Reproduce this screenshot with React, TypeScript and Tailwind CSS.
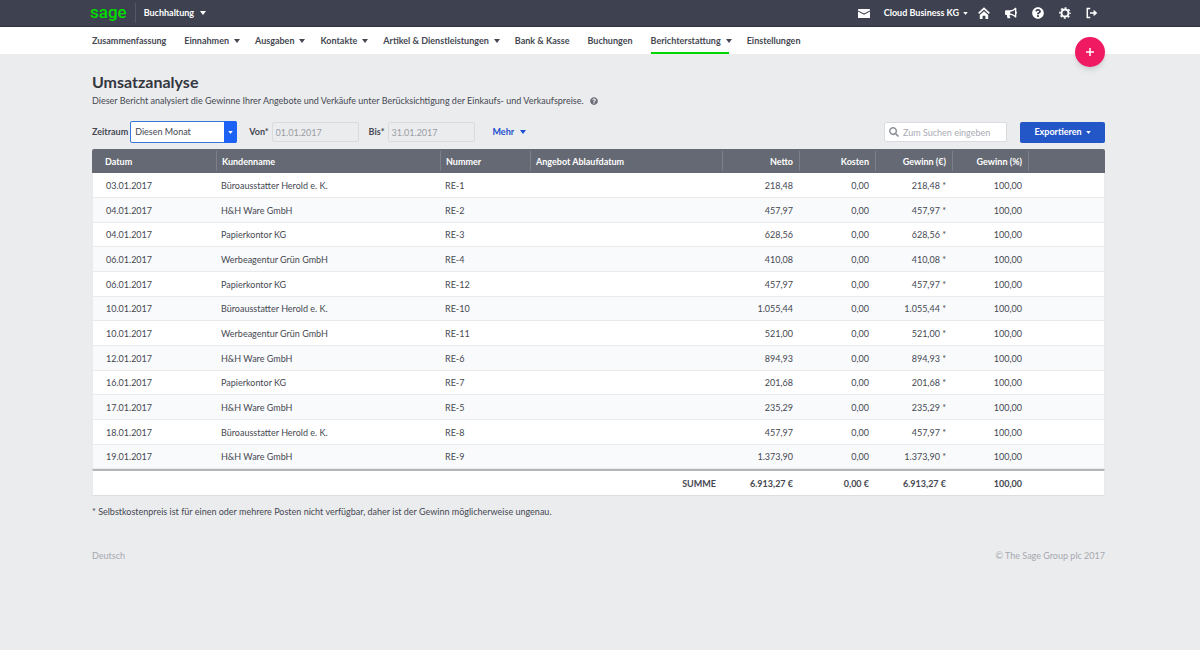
import { FaBullhorn, FaQuestionCircle, FaSearch } from "react-icons/fa";
import clsx from "clsx";

type Booking = {
  date: string;
  customer: string;
  number: string;
  net: string;
};

const bookings: Booking[] = [
  { date: "03.01.2017", customer: "Büroausstatter Herold e. K.", number: "RE-1", net: "218,48" },
  { date: "04.01.2017", customer: "H&H Ware GmbH", number: "RE-2", net: "457,97" },
  { date: "04.01.2017", customer: "Papierkontor KG", number: "RE-3", net: "628,56" },
  { date: "06.01.2017", customer: "Werbeagentur Grün GmbH", number: "RE-4", net: "410,08" },
  { date: "06.01.2017", customer: "Papierkontor KG", number: "RE-12", net: "457,97" },
  { date: "10.01.2017", customer: "Büroausstatter Herold e. K.", number: "RE-10", net: "1.055,44" },
  { date: "10.01.2017", customer: "Werbeagentur Grün GmbH", number: "RE-11", net: "521,00" },
  { date: "12.01.2017", customer: "H&H Ware GmbH", number: "RE-6", net: "894,93" },
  { date: "16.01.2017", customer: "Papierkontor KG", number: "RE-7", net: "201,68" },
  { date: "17.01.2017", customer: "H&H Ware GmbH", number: "RE-5", net: "235,29" },
  { date: "18.01.2017", customer: "Büroausstatter Herold e. K.", number: "RE-8", net: "457,97" },
  { date: "19.01.2017", customer: "H&H Ware GmbH", number: "RE-9", net: "1.373,90" },
];

const navItems = [
  { label: "Zusammenfassung" },
  { label: "Einnahmen", menu: true },
  { label: "Ausgaben", menu: true },
  { label: "Kontakte", menu: true },
  { label: "Artikel & Dienstleistungen", menu: true },
  { label: "Bank & Kasse" },
  { label: "Buchungen" },
  { label: "Berichterstattung", menu: true, active: true },
  { label: "Einstellungen" },
];

const columns = [
  { label: "Datum", width: "w-[124px]" },
  { label: "Kundenname", width: "w-[224px]" },
  { label: "Nummer", width: "w-[90px]" },
  { label: "Angebot Ablaufdatum", width: "w-[192px]" },
  { label: "Netto", width: "w-[77px]", right: true },
  { label: "Kosten", width: "w-[76px]", right: true },
  { label: "Gewinn (€)", width: "w-[77px]", right: true },
  { label: "Gewinn (%)", width: "w-[76px]", right: true },
  { label: "", width: "w-[77px]" },
];

const Caret = ({ className = "h-1 w-1.5" }: { className?: string }) => (
  <svg viewBox="0 0 6 4" className={clsx("shrink-0 fill-current", className)} aria-hidden="true">
    <path d="M0 0h6L3 4z" />
  </svg>
);

const MailIcon = () => (
  <svg viewBox="0 0 12 9" className="h-[9px] w-3 fill-current" aria-hidden="true">
    <path d="M.6 0h10.8q.6 0 .6.6v.8L6 4.6 0 1.400V.6Q0 0 .6 0z" />
    <path d="M0 2.600l6 3.200 6-3.200v5.800q0 .6-.6.6H.6Q0 9 0 8.400z" />
  </svg>
);

const HomeIcon = () => (
  <svg viewBox="0 0 12 12" className="size-3" aria-hidden="true">
    <path d="M.7 6.300L6 1.400l5.300 4.900" fill="none" stroke="currentColor" strokeWidth="1.700" />
    <path d="M6 4.200l4.200 3.900V12H7.400V8.800H4.600V12H1.800V8.100z" fill="currentColor" />
  </svg>
);

const GearIcon = () => (
  <svg viewBox="0 0 12 12" className="size-3" fill="none" stroke="currentColor" aria-hidden="true">
    <circle cx="6" cy="6" r="3.500" strokeWidth="1.900" />
    <circle cx="6" cy="6" r="5" strokeWidth="1.600" strokeDasharray="1.960 1.967" strokeDashoffset="0.980" />
  </svg>
);

const LogoutIcon = () => (
  <svg viewBox="0 0 12 12" className="size-3" aria-hidden="true">
    <path d="M4.200 1.500H1.300v9h2.900" fill="none" stroke="currentColor" strokeWidth="1.500" />
    <path d="M4 5.200h3.600V2.800L11.300 6 7.600 9.200V6.800H4z" fill="currentColor" />
  </svg>
);

const TopBar = () => (
  <header className="flex h-[27px] items-center justify-between border-b border-[#2e313d] bg-[#3e4250] pr-[102px] pl-[90px] text-white">
    <div className="flex h-full items-center">
      <a href="#" className="pb-[3px] font-[Roboto,sans-serif] text-[17px] leading-5 font-medium text-[#00dc00]">
        sage
      </a>
      <div className="ml-2 h-5 border-l border-[#555967]" />
      <button className="ml-2 flex items-center gap-1.5 font-bold">
        Buchhaltung
        <Caret />
      </button>
    </div>
    <div className="flex items-center">
      <button aria-label="Nachrichten">
        <MailIcon />
      </button>
      <button className="ml-[14px] flex items-center gap-1 font-bold">
        Cloud Business KG
        <Caret className="h-[3px] w-[5px]" />
      </button>
      <div className="ml-2.5 flex items-center gap-[15px]">
        <button aria-label="Startseite">
          <HomeIcon />
        </button>
        <button aria-label="Neuigkeiten">
          <FaBullhorn className="size-3" />
        </button>
        <button aria-label="Hilfe">
          <FaQuestionCircle className="size-3" />
        </button>
        <button aria-label="Einstellungen">
          <GearIcon />
        </button>
        <button aria-label="Abmelden">
          <LogoutIcon />
        </button>
      </div>
    </div>
  </header>
);

const MainNav = () => (
  <nav className="relative flex h-[27px] gap-[18px] bg-white pl-[92px] font-bold">
    {navItems.map((item) => (
      <a
        key={item.label}
        href="#"
        className={clsx(
          "flex h-[27px] items-center gap-[5px] border-b-2 pt-0.5",
          item.active ? "border-[#00d700]" : "border-transparent",
        )}
      >
        {item.label}
        {item.menu && <Caret className="-mr-[3px] h-1 w-1.5" />}
      </a>
    ))}
    <button
      aria-label="Neu"
      className="absolute top-[10px] right-[95px] flex size-[30px] items-center justify-center rounded-full bg-[#ef1a61] text-white shadow-md"
    >
      <svg viewBox="0 0 10 10" className="size-2.5" stroke="currentColor" strokeWidth="1.500" aria-hidden="true">
        <path d="M5 1v8M1 5h8" />
      </svg>
    </button>
  </nav>
);

const Filters = () => (
  <div className="flex h-[22px] items-center">
    <label htmlFor="period" className="font-bold">
      Zeitraum
    </label>
    <div className="relative ml-0.5 h-[22px] w-[107px]">
      <select
        id="period"
        className="h-full w-full appearance-none rounded-xs border border-[#3a76d6] bg-white pl-1"
      >
        <option>Diesen Monat</option>
      </select>
      <span className="pointer-events-none absolute inset-y-0 right-0 flex w-[13px] items-center justify-center rounded-r-xs bg-[#1b62f5] text-white">
        <Caret className="h-[3px] w-[5px]" />
      </span>
    </div>
    <label htmlFor="from" className="ml-3 font-bold">
      Von*
    </label>
    <input
      id="from"
      disabled
      defaultValue="01.01.2017"
      className="ml-[3px] h-5 w-[87px] rounded-xs border border-[#d9dbde] bg-[#ebecee] px-[3px] text-[#9a9ca4]"
    />
    <label htmlFor="to" className="ml-2.5 font-bold">
      Bis*
    </label>
    <input
      id="to"
      disabled
      defaultValue="31.01.2017"
      className="ml-[3px] h-5 w-[87px] rounded-xs border border-[#d9dbde] bg-[#ebecee] px-[3px] text-[#9a9ca4]"
    />
    <button className="ml-[18px] flex items-center gap-1.5 font-bold text-[#1b4fd0]">
      Mehr
      <Caret />
    </button>
    <div className="relative ml-auto">
      <FaSearch className="absolute top-[5px] left-[5px] size-2.5 text-[#8f9299]" />
      <input
        type="text"
        aria-label="Suche"
        placeholder="Zum Suchen eingeben"
        className="block h-5 w-[123px] rounded-xs border border-[#d9dbde] bg-white pl-[18px] placeholder:text-[#a9abb2]"
      />
    </div>
    <button className="ml-[13px] flex h-[21px] w-[85px] items-center justify-center gap-1 rounded-xs bg-[#2357c8] font-bold text-white">
      Exportieren
      <Caret className="h-[3px] w-[5px]" />
    </button>
  </div>
);

const ReportTable = () => (
  <table className="mt-1.5 w-full table-fixed border-separate border-spacing-0">
    <thead>
      <tr className="h-6 text-left text-white">
        {columns.map((column, i) => (
          <th
            key={column.label}
            className={clsx(
              "bg-[#656973] p-0 first:rounded-tl-xs last:rounded-tr-xs",
              column.width,
              column.right && "text-right",
            )}
          >
            <div
              className={clsx(
                "flex h-5 items-center border-l pt-0.5",
                i === 0 ? "border-transparent pl-3" : "border-[#7c808a] pl-[5px]",
                column.right && "justify-end pr-1.5",
              )}
            >
              {column.label}
            </div>
          </th>
        ))}
      </tr>
    </thead>
    <tbody className="[&_td]:border-b [&_td]:border-[#e9eaec] [&_td]:pt-px [&_td]:pb-0 [&_td]:pl-[5px] [&_td:nth-child(n+5)]:pr-1.5">
      {bookings.map((b) => (
        <tr key={b.number} className="h-[25px] bg-white even:bg-[#f9fafb] nth-[3n]:h-6">
          <td className="border-l pl-[13px]!">{b.date}</td>
          <td>{b.customer}</td>
          <td>{b.number}</td>
          <td />
          <td className="text-right">{b.net}</td>
          <td className="text-right">0,00</td>
          <td className="text-right">{b.net} *</td>
          <td className="text-right">100,00</td>
          <td className="border-r" />
        </tr>
      ))}
    </tbody>
    <tfoot className="[&_td]:border-t-2 [&_td]:border-b [&_td]:border-t-[#b4b7ba] [&_td]:border-b-[#dcdee0] [&_td]:pt-0.5 [&_td]:pr-1.5 [&_td]:pb-0">
      <tr className="h-[27px] bg-white text-right font-bold">
        <td colSpan={4} className="border-l border-l-[#e9eaec]">
          SUMME
        </td>
        <td>6.913,27 €</td>
        <td>0,00 €</td>
        <td>6.913,27 €</td>
        <td>100,00</td>
        <td className="border-r border-r-[#e9eaec]" />
      </tr>
    </tfoot>
  </table>
);

const App = () => {
  return (
    <div className="min-h-screen bg-[#ebecee] font-[Lato,sans-serif] text-[9px] leading-3 text-[#454852]">
      <TopBar />
      <MainNav />
      <main className="pr-[95px] pl-[92px]">
        <h1 className="pt-4 text-[16px] leading-6 font-bold text-[#33363f]">Umsatzanalyse</h1>
        <p className="mt-px mb-[14px] flex items-center gap-1.5">
          Dieser Bericht analysiert die Gewinne Ihrer Angebote und Verkäufe unter Berücksichtigung der Einkaufs- und
          Verkaufspreise.
          <FaQuestionCircle className="size-2 text-[#6b6e77]" />
        </p>
        <Filters />
        <ReportTable />
        <p className="mt-2.5">
          * Selbstkostenpreis ist für einen oder mehrere Posten nicht verfügbar, daher ist der Gewinn möglicherweise
          ungenau.
        </p>
        <footer className="mt-8 flex justify-between text-[#a6a8af]">
          <a href="#">Deutsch</a>
          <span>© The Sage Group plc 2017</span>
        </footer>
      </main>
    </div>
  );
};

export default App;
